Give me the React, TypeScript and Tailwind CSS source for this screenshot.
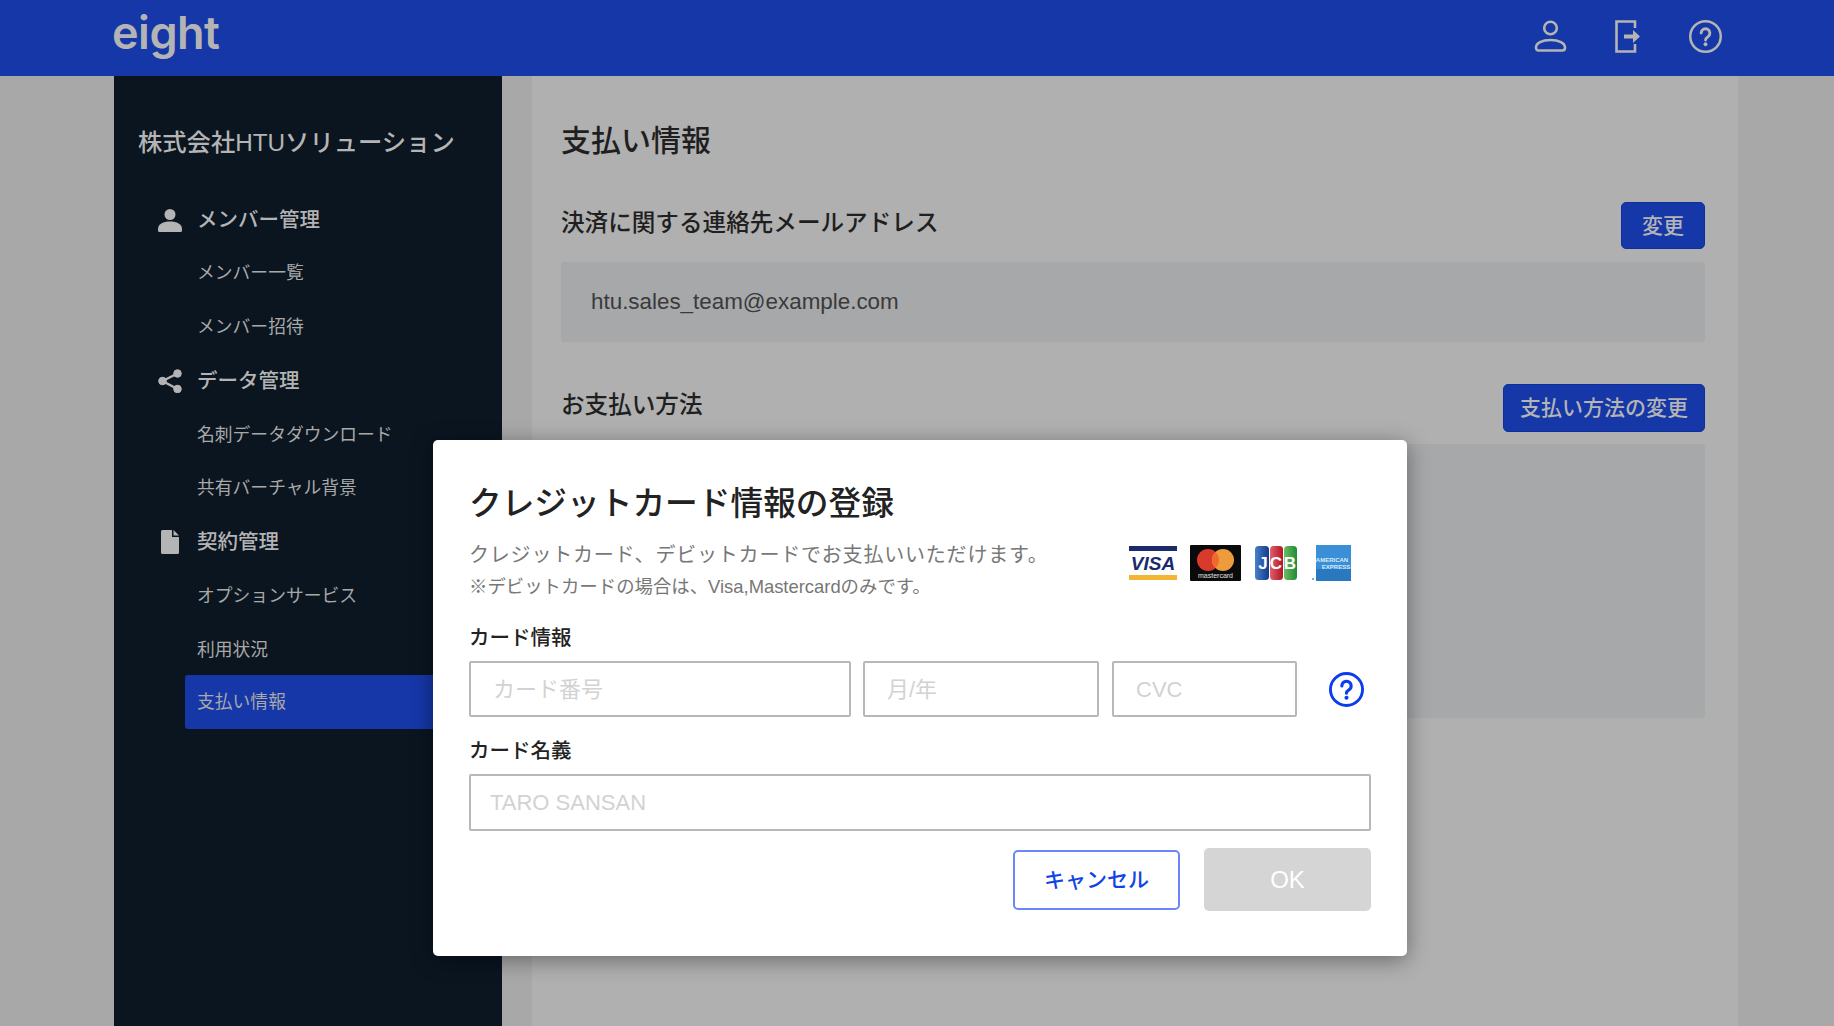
const JP = "font-['Liberation_Sans','Noto_Sans_CJK_JP',sans-serif]";

const subClass = 'h-[53.75px] flex items-center pl-[83px] text-[17.8px] text-[#a8a8a8]';
const groupClass = 'h-[53.75px] flex items-center pl-[44px] gap-[15px] text-[20.5px] font-medium text-[#b4b4b4]';

function PersonIcon() {
  return (
    <svg className="w-[24px] h-[24px]" viewBox="0 0 24 24" fill="#b4b4b4">
      <circle cx="12" cy="6.500" r="5.500" />
      <path d="M0 21c0-5 5-7.500 12-7.500S24 16 24 21v1.500a1.500 1.500 0 0 1-1.500 1.500h-21A1.500 1.500 0 0 1 0 22.500Z" />
    </svg>
  );
}

function ShareIcon() {
  return (
    <svg className="w-[24px] h-[24px]" viewBox="0 0 24 24" fill="#b4b4b4" stroke="#b4b4b4">
      <circle cx="19.500" cy="4.500" r="3.800" />
      <circle cx="4.500" cy="12" r="3.800" />
      <circle cx="19.500" cy="20" r="3.800" />
      <path d="M19.500 4.500 4.500 12l15 8" fill="none" strokeWidth="2.400" />
    </svg>
  );
}

function FileIcon() {
  return (
    <svg className="w-[24px] h-[24px]" viewBox="0 0 24 24" fill="#b4b4b4">
      <path d="M3 1.500A1.500 1.500 0 0 1 4.500 0H14v7h7v15.500a1.500 1.500 0 0 1-1.500 1.500h-15A1.500 1.500 0 0 1 3 22.500ZM15.500 0 21 5.500h-5.500Z" />
    </svg>
  );
}

function Sidebar() {
  return (
    <aside className="w-[388px] h-[950px] shrink-0 bg-[#0a1520]">
      <div className="pl-[24px] pt-[51px] h-[117px] text-[24.3px] leading-[32px] font-medium text-[#b4b4b4] whitespace-nowrap">
        株式会社HTUソリューション
      </div>
      <div className={groupClass}><PersonIcon />メンバー管理</div>
      <div className={subClass}>メンバー一覧</div>
      <div className={subClass}>メンバー招待</div>
      <div className={groupClass}><ShareIcon />データ管理</div>
      <div className={subClass}>名刺データダウンロード</div>
      <div className={subClass}>共有バーチャル背景</div>
      <div className={groupClass}><FileIcon />契約管理</div>
      <div className={subClass}>オプションサービス</div>
      <div className={subClass}>利用状況</div>
      <div className="-mt-[2px] ml-[71px] h-[54px] pt-[2px] flex items-center pl-[12px] rounded-l-[3px] bg-[#1537a8] text-[17.8px] text-[#a8a8a8]">支払い情報</div>
    </aside>
  );
}

function Main() {
  return (
    <main className="ml-[30px] w-[1206px] h-[950px] shrink-0 bg-[#b0b0b0] pl-[29px] pr-[33px] text-[#1f1f1f]">
      <h1 className="pt-[43px] text-[30px] leading-[44px] font-medium">支払い情報</h1>
      <div className="mt-[39px] flex justify-between items-start h-[60px]">
        <h2 className="pt-[5px] text-[23.6px] leading-[32px] font-medium">決済に関する連絡先メールアドレス</h2>
        <button className="w-[84px] h-[47px] rounded-[5px] border border-[#0f2fa0] bg-[#1537a8] text-[21px] font-medium text-[#b4b4b4]">変更</button>
      </div>
      <div className="h-[80px] rounded-[2px] bg-[#a7a8aa] flex items-center pl-[30px] text-[22.4px] text-[#3a3a3a]">htu.sales_team@example.com</div>
      <div className="mt-[42px] flex justify-between items-start h-[60px]">
        <h2 className="pt-[5px] text-[23.6px] leading-[32px] font-medium">お支払い方法</h2>
        <button className="w-[202px] h-[48px] rounded-[5px] border border-[#0f2fa0] bg-[#1537a8] text-[21px] font-medium text-[#b4b4b4]">支払い方法の変更</button>
      </div>
      <div className="h-[274px] rounded-[2px] bg-[#a7a8aa]" />
    </main>
  );
}

function VisaLogo() {
  return (
    <svg width="48" height="34" viewBox="0 0 48 34">
      <rect width="48" height="34" fill="#ffffff" />
      <rect width="48" height="5" y="0" fill="#1a2a6c" />
      <rect width="48" height="5" y="29" fill="#f2b632" />
      <text x="24" y="24" textAnchor="middle" fontFamily="'Liberation Sans',sans-serif" fontWeight="700" fontStyle="italic" fontSize="19" fill="#1a2a6c">VISA</text>
    </svg>
  );
}

function MastercardLogo() {
  return (
    <svg width="51" height="36" viewBox="0 0 51 36">
      <rect width="51" height="36" rx="1" fill="#0a0a0a" />
      <circle cx="18" cy="15" r="11" fill="#d93a2b" />
      <circle cx="33" cy="15" r="11" fill="#ec9c3c" />
      <path d="M25.500 7a11 11 0 0 1 0 16 11 11 0 0 1 0-16Z" fill="#ef6a2c" />
      <text x="25.500" y="33" textAnchor="middle" fontFamily="'Liberation Sans',sans-serif" fontSize="7" fill="#e0e0e0">mastercard</text>
    </svg>
  );
}

function JcbLogo() {
  return (
    <svg width="42" height="34" viewBox="0 0 42 34">
      <defs>
        <linearGradient id="jcb-blue" x1="0" x2="1" y1="0" y2="0">
          <stop offset="0" stopColor="#4a7fc8" />
          <stop offset="1" stopColor="#123a8c" />
        </linearGradient>
        <linearGradient id="jcb-red" x1="0" x2="1" y1="0" y2="0">
          <stop offset="0" stopColor="#e0606a" />
          <stop offset="1" stopColor="#b01525" />
        </linearGradient>
        <linearGradient id="jcb-green" x1="0" x2="1" y1="0" y2="0">
          <stop offset="0" stopColor="#6cbd62" />
          <stop offset="1" stopColor="#1f8a35" />
        </linearGradient>
      </defs>
      <rect x="0" width="14" height="34" rx="3.500" fill="url(#jcb-blue)" />
      <rect x="15" width="13" height="34" rx="3.500" fill="url(#jcb-red)" />
      <rect x="29" width="13" height="34" rx="3.500" fill="url(#jcb-green)" />
      <g fontFamily="'Liberation Sans',sans-serif" fontWeight="700" fontSize="17" fill="#ffffff" textAnchor="middle">
        <text x="8" y="23">J</text>
        <text x="21" y="23">C</text>
        <text x="35" y="23">B</text>
      </g>
    </svg>
  );
}

function AmexLogo() {
  return (
    <svg width="39" height="36" viewBox="0 0 39 36">
      <rect x="4" width="35" height="36" fill="#3a8fd6" />
      <rect x="4" y="24" width="35" height="12" fill="#2a78c0" />
      <g fontFamily="'Liberation Sans',sans-serif" fontWeight="700" fontSize="6" fill="#d8ecfa" textAnchor="middle">
        <text x="20" y="17">AMERICAN</text>
        <text x="24" y="24">EXPRESS</text>
      </g>
      <circle cx="1" cy="34" r="1" fill="#3a8fd6" />
    </svg>
  );
}

function HelpIcon({ color, size, width }: { color: string; size: number; width: number }) {
  return (
    <svg width={size} height={size} viewBox="0 0 34 34" fill="none">
      <circle cx="17" cy="17" r={17 - width / 2} stroke={color} strokeWidth={width} />
      <path d="M12.500 13.500a4.500 4.500 0 1 1 6.800 3.900c-1.500.900-2.300 1.700-2.300 3.300" stroke={color} strokeWidth="3" strokeLinecap="round" />
      <circle cx="17" cy="25" r="2" fill={color} />
    </svg>
  );
}

function CardModal() {
  const inputClass = 'h-[56px] rounded-[2px] border-2 border-[#b8b8b8] flex items-center text-[22px] text-[#d2d2d2]';
  return (
    <div className="absolute left-[433px] top-[440px] w-[974px] h-[516px] rounded-[5px] bg-white shadow-[0_4px_22px_rgba(0,0,0,0.4)] px-[36px]">
      <h2 className="pt-[42px] text-[32.7px] leading-[44px] font-medium text-[#222222] whitespace-nowrap">クレジットカード情報の登録</h2>
      <div className="flex justify-between">
        <div>
          <p className="mt-[13px] text-[20px] leading-[32px] tracking-[0.8px] text-[#777777] whitespace-nowrap">クレジットカード、デビットカードでお支払いいただけます。</p>
          <p className="text-[18.4px] leading-[32px] text-[#777777] whitespace-nowrap">※デビットカードの場合は、Visa,Mastercardのみです。</p>
        </div>
        <div className="mt-[5px] pr-[20px] flex items-center h-[64px]">
          <VisaLogo />
          <div className="ml-[13px]"><MastercardLogo /></div>
          <div className="ml-[14px]"><JcbLogo /></div>
          <div className="ml-[15px]"><AmexLogo /></div>
        </div>
      </div>
      <div className="mt-[21px] text-[20.5px] leading-[28px] font-medium text-[#222222]">カード情報</div>
      <div className="mt-[9px] flex items-center">
        <div className={`${inputClass} w-[382px] pl-[22px]`}>カード番号</div>
        <div className={`${inputClass} ml-[12px] w-[236px] pl-[22px]`}>月/年</div>
        <div className={`${inputClass} ml-[13px] w-[185px] pl-[22px]`}>CVC</div>
        <div className="ml-[32px]"><HelpIcon color="#0a3cf0" size={35} width={2.800} /></div>
      </div>
      <div className="mt-[20px] text-[20.5px] leading-[28px] font-medium text-[#222222]">カード名義</div>
      <div className={`mt-[9px] ${inputClass} h-[57px] pl-[19px]`}>TARO SANSAN</div>
      <div className="mt-[17px] flex justify-end items-center">
        <button className="w-[167px] h-[60px] rounded-[5px] border-2 border-[#6b86f5] text-[21px] font-medium text-[#0f44e6]">キャンセル</button>
        <button className="ml-[24px] w-[167px] h-[63px] rounded-[5px] bg-[#d5d5d5] text-[24px] font-medium text-white">OK</button>
      </div>
    </div>
  );
}

export default function App() {
  return (
    <div className={`relative h-[1026px] overflow-hidden bg-[#a8a8a8] ${JP}`}>
      <header className="h-[76px] bg-[#1537a8] flex items-center justify-between pl-[112px] pr-[112px]">
        <span className="font-['Inter',sans-serif] text-[45px] leading-[62px] font-semibold -mt-[10px] tracking-[-0.5px] text-[#b4b4b4]">eight</span>
        <div className="-mt-[3px] flex items-center gap-[48px]">
          <svg width="33" height="33" viewBox="0 0 33 33" fill="none" stroke="#b4b4b4" strokeWidth="2.600">
            <circle cx="16.500" cy="8" r="6.300" />
            <path d="M2 27.500c0-4.500 6-7.500 14.500-7.500S31 23 31 27.500c0 2-1 3-2.500 3h-24C3 30.500 2 29.500 2 27.500Z" />
          </svg>
          <svg width="26" height="33" viewBox="0 0 26 33" fill="none" stroke="#b4b4b4" strokeWidth="2.600">
            <path d="M20 8V1.500H1.500v30H20V24" />
            <path d="M9 16.500h10" strokeWidth="4" />
            <path d="m18 10 7 6.500-7 6.500Z" fill="#b4b4b4" stroke="none" />
          </svg>
          <HelpIcon color="#b4b4b4" size={33} width={2.600} />
        </div>
      </header>
      <div className="flex pl-[114px]">
        <Sidebar />
        <Main />
      </div>
      <CardModal />
    </div>
  );
}
